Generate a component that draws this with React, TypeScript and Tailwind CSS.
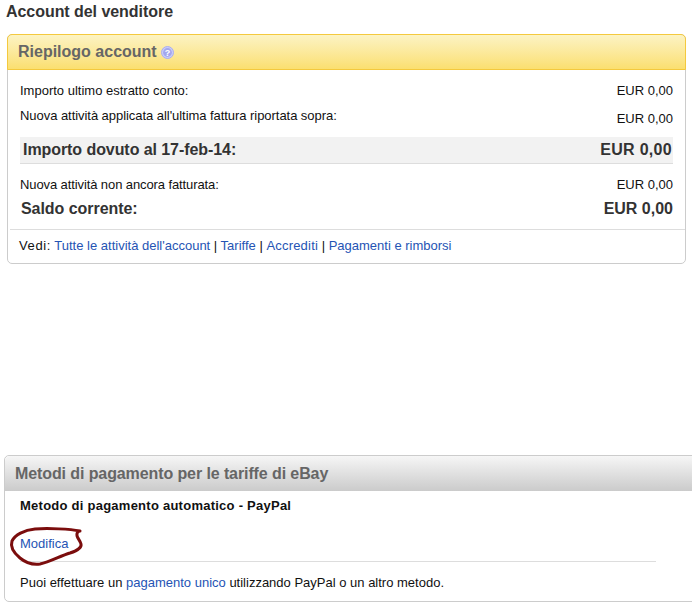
export default function App() {
  const link = "text-[#2554b4]";
  return (
    <div className="relative h-[603px] w-[692px] overflow-hidden bg-white font-['Liberation_Sans',Arial,sans-serif] text-[13px] leading-[14px] text-[#111]">
      <h1 className="ml-[6px] pt-[3px] text-[16px] font-bold leading-[18px] tracking-[-0.05px] text-[#333]">Account del venditore</h1>

      <section className="ml-[7px] mt-[13px] h-[230px] w-[679px] rounded-[5px] border border-[#cccccc]">
        <header className="-mx-px -mt-px flex h-[36px] items-center rounded-t-[5px] border border-[#f4c93e] bg-linear-to-b from-[#fcf3c3] to-[#fbdf6f] pl-[10px]">
          <h2 className="text-[16px] font-bold leading-[18px] text-[#666]">Riepilogo account</h2>
          <svg className="ml-[4px]" width="13" height="13" viewBox="0 0 13 13">
            <circle cx="6.5" cy="6.5" r="6" fill="#c9ccf8" stroke="#a9adf0" />
            <circle cx="6.5" cy="6.5" r="4.4" fill="#a3a7ee" />
            <text x="6.5" y="10" textAnchor="middle" fontSize="9" fontWeight="700" fill="#fff" fontFamily="Liberation Sans">?</text>
          </svg>
        </header>

        <div className="px-[12px] pt-[14px]">
          <div className="flex h-[14px] justify-between">
            <span>Importo ultimo estratto conto:</span>
            <span>EUR 0,00</span>
          </div>
          <div className="mt-[11px] flex h-[17px] justify-between">
            <span className="tracking-[-0.05px]">Nuova attività applicata all'ultima fattura riportata sopra:</span>
            <span className="pt-[3px]">EUR 0,00</span>
          </div>
          <div className="mt-[11px] flex h-[27px] items-center justify-between border-b border-[#dddddd] bg-[#f2f2f2] pl-[3px] pr-[1px] text-[16px] font-bold text-[#333]">
            <span className="tracking-[-0.07px]">Importo dovuto al 17-feb-14:</span>
            <span className="tracking-[0.3px]">EUR 0,00</span>
          </div>
          <div className="mt-[14px] flex h-[14px] justify-between">
            <span className="tracking-[-0.1px]">Nuova attività non ancora fatturata:</span>
            <span>EUR 0,00</span>
          </div>
          <div className="mt-[7px] flex h-[20px] items-center justify-between pl-[1px] text-[16px] font-bold text-[#333]">
            <span className="tracking-[-0.05px]">Saldo corrente:</span>
            <span>EUR 0,00</span>
          </div>
        </div>

        <div className="ml-[2px] mt-[10px] border-t border-[#dddddd] pl-[9px] pt-[9px]">
          <span className="tracking-[0.6px]">Vedi:</span> <span className={link}>Tutte le attività dell'account</span> | <span className={link}>Tariffe</span> | <span className={`${link} tracking-[0.2px]`}>Accrediti</span> | <span className={link}>Pagamenti e rimborsi</span>
        </div>
      </section>

      <section className="ml-[4px] mt-[191px] h-[147px] w-[700px] rounded-[5px] border border-[#cccccc]">
        <header className="flex h-[35px] items-center rounded-t-[5px] bg-linear-to-b from-[#f6f6f6] to-[#cbcbcb] pl-[10px]">
          <h2 className="text-[16px] font-bold leading-[18px] tracking-[-0.1px] text-[#666]">Metodi di pagamento per le tariffe di eBay</h2>
        </header>
        <div className="pl-[15px] pt-[8px]">
          <p className="font-bold tracking-[0.25px]">Metodo di pagamento automatico - PayPal</p>
          <p className={`mt-[24px] ${link}`}>Modifica</p>
          <div className="mt-[10px] w-[636px] border-t border-[#dddddd] pt-[14px] text-[#111]">
            Puoi effettuare un <span className={link}>pagamento unico</span> utilizzando PayPal o un altro metodo.
          </div>
        </div>
      </section>

      <svg className="absolute left-0 top-0" width="692" height="603" viewBox="0 0 692 603" fill="none">
        <path
          d="M80 531 C70 529 48 528 35 529 C24 530 15 535 12 541 C10 547 14 553 20 558 C26 563 32 565 40 564 C50 562 60 556 70 553 C76 551 82 548 81 544 C80 540 76 537 77 534 C77 532 79 531 80 531"
          stroke="#7b0d0d"
          strokeWidth="3"
          strokeLinecap="round"
        />
      </svg>
    </div>
  );
}
